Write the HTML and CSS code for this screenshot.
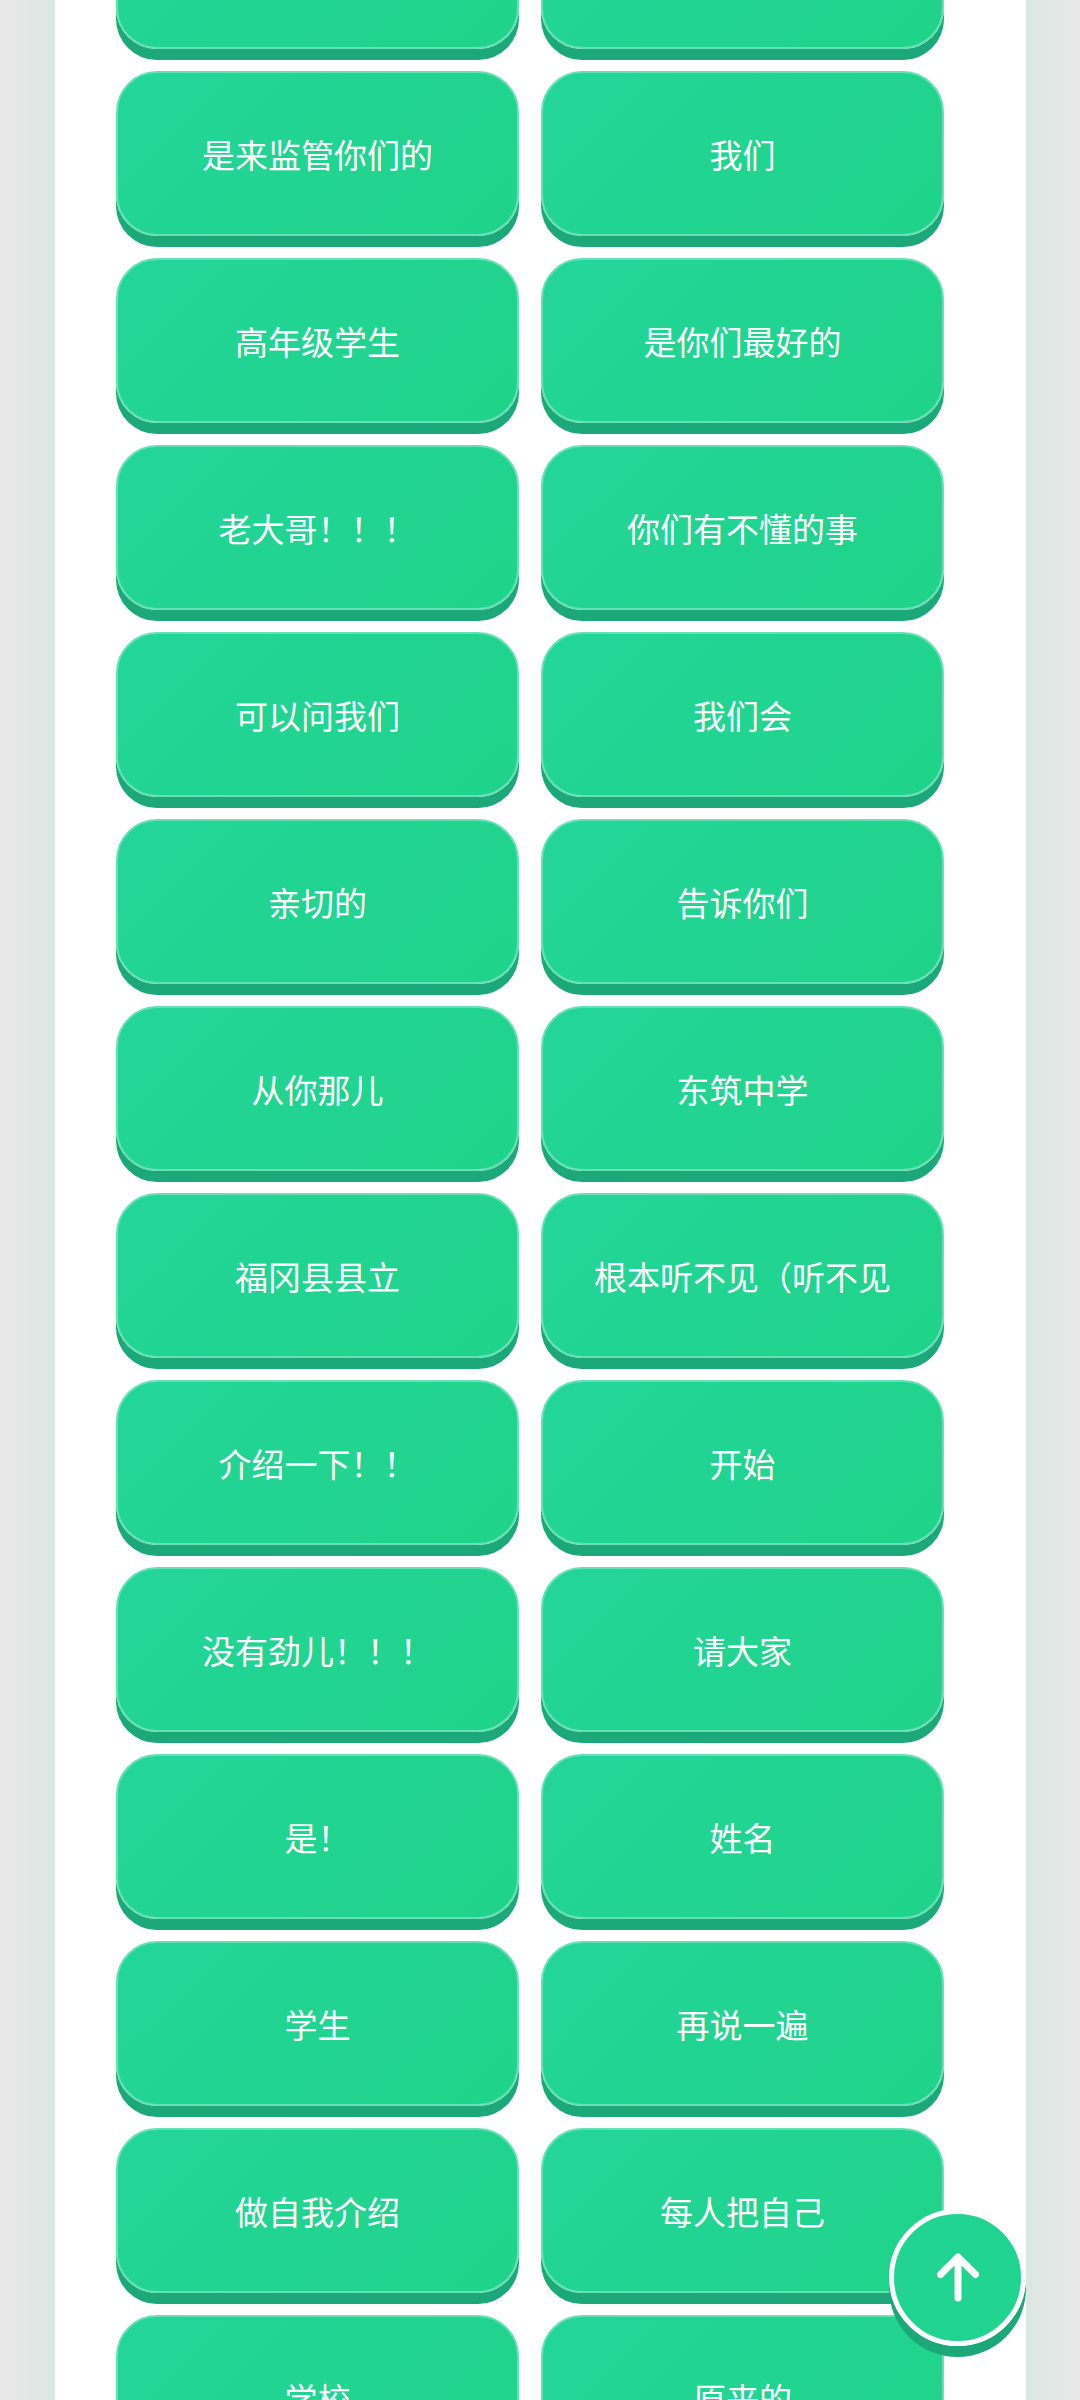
FILE: index.html
```
<!DOCTYPE html>
<html lang="zh-CN">
  <head>
    <meta charset="UTF-8" />
    <meta name="viewport" content="width=device-width, initial-scale=1.0">
    <title>单词列表</title>
    <link rel="stylesheet" href="styles.css">
  </head>
  <body>
    <main class="card">
      <div class="list">
        <button class="btn"></button>
        <button class="btn"></button>
        <button class="btn">是来监管你们的</button>
        <button class="btn">我们</button>
        <button class="btn">高年级学生</button>
        <button class="btn">是你们最好的</button>
        <button class="btn">老大哥！！！</button>
        <button class="btn">你们有不懂的事</button>
        <button class="btn">可以问我们</button>
        <button class="btn">我们会</button>
        <button class="btn">亲切的</button>
        <button class="btn">告诉你们</button>
        <button class="btn">从你那儿</button>
        <button class="btn">东筑中学</button>
        <button class="btn">福冈县县立</button>
        <button class="btn">根本听不见（听不见</button>
        <button class="btn">介绍一下！！</button>
        <button class="btn">开始</button>
        <button class="btn">没有劲儿！！！</button>
        <button class="btn">请大家</button>
        <button class="btn">是！</button>
        <button class="btn">姓名</button>
        <button class="btn">学生</button>
        <button class="btn">再说一遍</button>
        <button class="btn">做自我介绍</button>
        <button class="btn">每人把自己</button>
        <button class="btn">学校</button>
        <button class="btn">原来的</button>
      </div>
    </main>

    <button class="to-top" aria-label="返回顶部">
      <svg class="arrow" viewBox="0 0 42 50" aria-hidden="true">
        <path d="M21 45V4M3.500 21.500L21 4L38.500 21.500" />
      </svg>
    </button>
  </body>
</html>
```

FILE: styles.css
```
* {
  box-sizing: border-box;
}

body,html {
  height: 100%;
  margin: 0;
}

body {
  overflow: hidden;
  background-color: #e8e8e8;
  font-family: "Noto Sans CJK SC", sans-serif;
}

.card {
  margin: 0 54px 0 55px;
  padding: 0 82px 0 61px;
  background-color: #fff;
  box-shadow: 0 0 55px rgba(32, 211, 146, 0.13);
}

/* the list is already scrolled past its first row */
.list {
  display: grid;
  grid-template-columns: 1fr 1fr;
  gap: 22px;
  margin-top: -116px;
}

.btn {
  height: 165px;
  padding: 0 11px;
  border: 2px solid #65e1b5;
  border-radius: 41px;
  background: linear-gradient(135deg, #23d59a 0%, #20d389 100%) border-box;
  box-shadow: 0 11px 0 #1da87a;
  color: #fff;
  font-family: inherit;
  font-size: 33px;
  line-height: 48px;
  white-space: nowrap;
  cursor: pointer;
}

.to-top {
  position: fixed;
  right: 54px;
  bottom: 54px;
  display: flex;
  align-items: center;
  justify-content: center;
  width: 137px;
  height: 137px;
  padding: 0;
  border: 5px solid #fff;
  border-radius: 50%;
  background: linear-gradient(135deg, #22d496 0%, #20d38d 100%);
  box-shadow: 0 11px 0 #1da87a;
  cursor: pointer;
}

.btn:active,
.to-top:active {
  box-shadow: none;
}

.arrow {
  width: 42px;
  height: 50px;
  fill: none;
  stroke: #fff;
  stroke-width: 7;
  stroke-linecap: round;
  stroke-linejoin: round;
}
```
